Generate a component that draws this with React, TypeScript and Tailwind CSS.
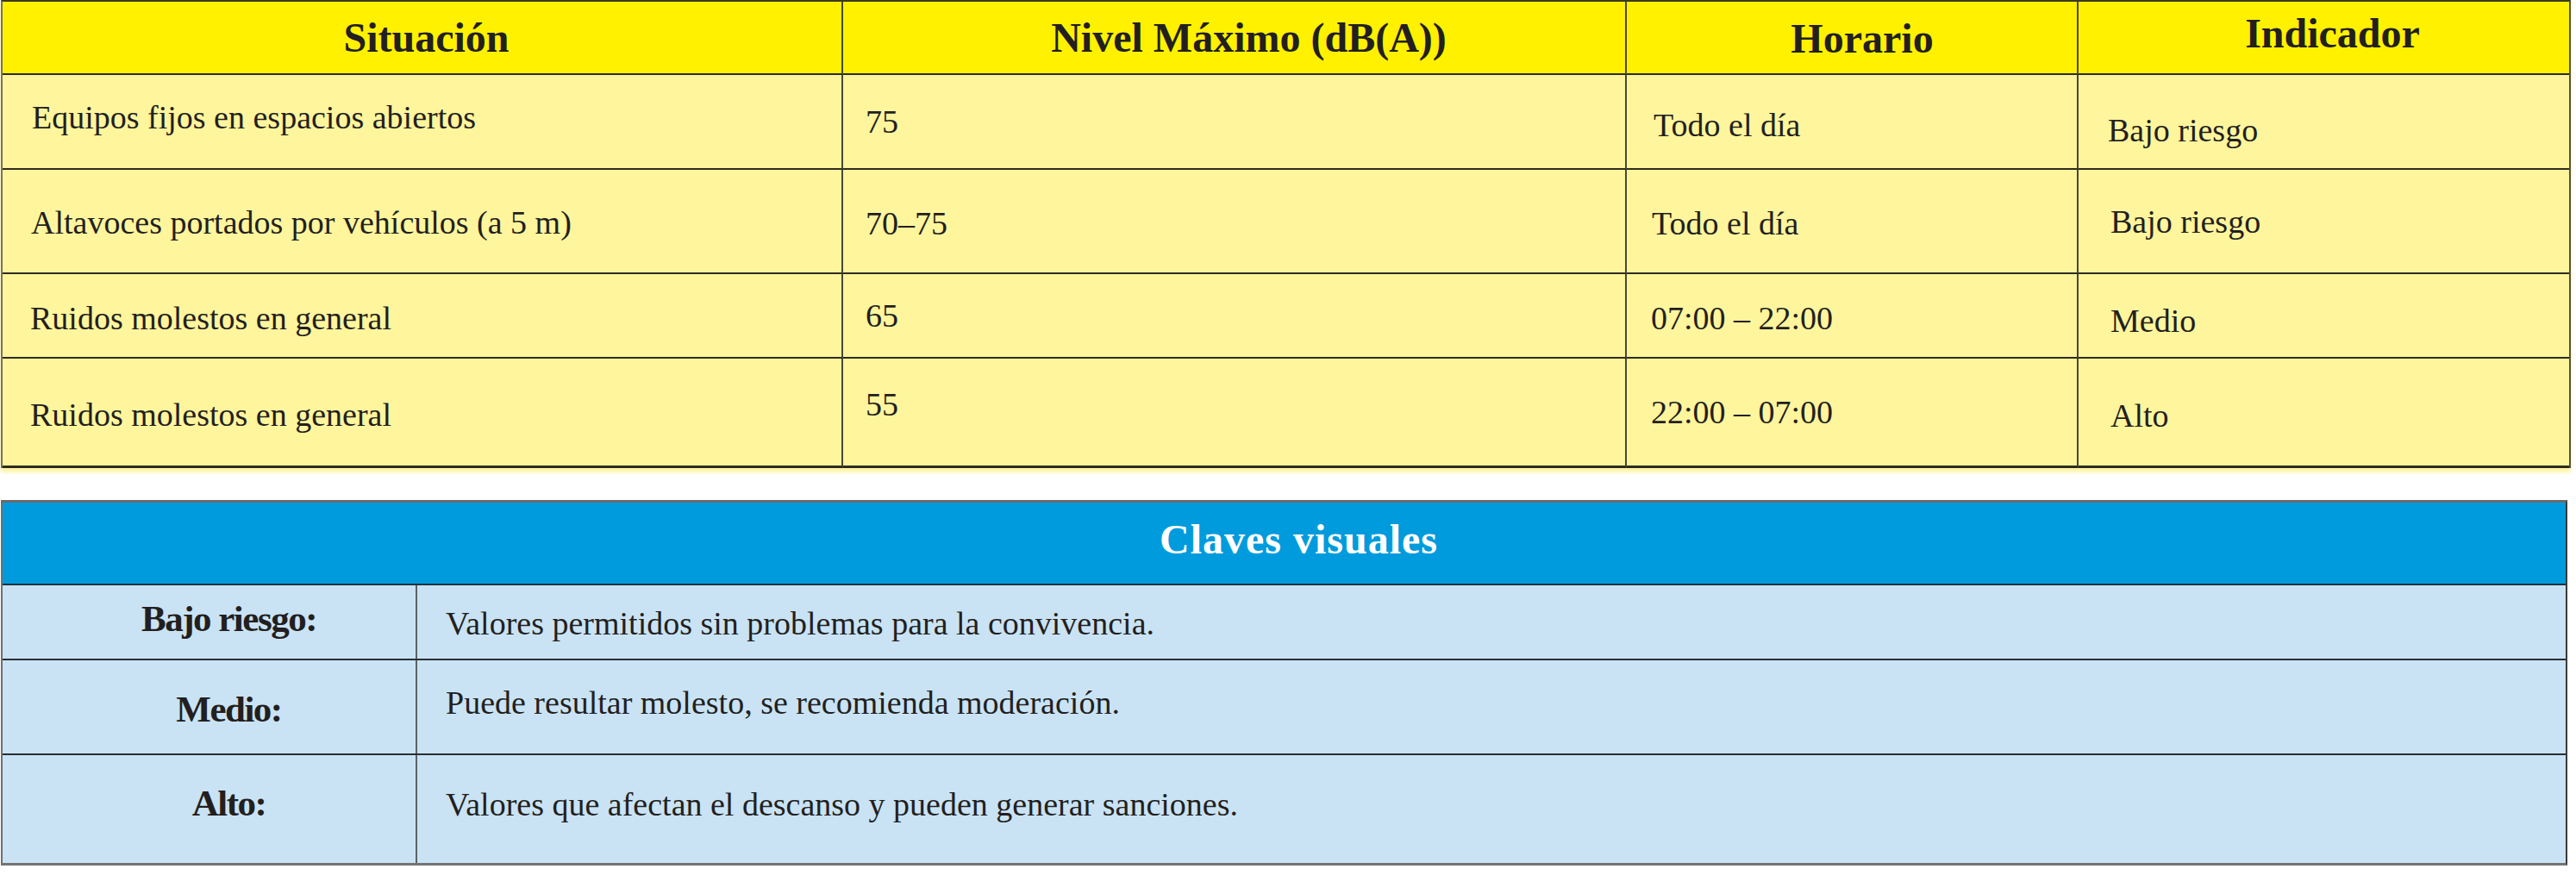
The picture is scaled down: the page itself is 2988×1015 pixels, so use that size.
import React from 'react';

type Cell = { text: string; cls: string };

const headers: Cell[] = [
  { text: 'Situación', cls: 'justify-center pl-[10px]' },
  { text: 'Nivel Máximo (dB(A))', cls: 'justify-center pl-[34px]' },
  { text: 'Horario', cls: 'justify-center pt-[2px] pl-[24px]' },
  { text: 'Indicador', cls: 'justify-center pb-[10px] pl-[20px]' },
];

const rows: { h: string; cells: Cell[] }[] = [
  {
    h: 'h-[110px]',
    cells: [
      { text: 'Equipos fijos en espacios abiertos', cls: 'pl-[34px] pb-[10px]' },
      { text: '75', cls: 'pl-[26px]' },
      { text: 'Todo el día', cls: 'pl-[31px] pt-[8px]' },
      { text: 'Bajo riesgo', cls: 'pl-[34px] pt-[20px]' },
    ],
  },
  {
    h: 'h-[121px]',
    cells: [
      { text: 'Altavoces portados por vehículos (a 5 m)', cls: 'pl-[33px] pt-[3px]' },
      { text: '70–75', cls: 'pl-[26px] pt-[4px]' },
      { text: 'Todo el día', cls: 'pl-[29px] pt-[5px]' },
      { text: 'Bajo riesgo', cls: 'pl-[37px]' },
    ],
  },
  {
    h: 'h-[98px]',
    cells: [
      { text: 'Ruidos molestos en general', cls: 'pl-[32px] pt-[6px]' },
      { text: '65', cls: 'pl-[26px]' },
      { text: '07:00 – 22:00', cls: 'pl-[28px] pt-[6px]' },
      { text: 'Medio', cls: 'pl-[37px] pt-[12px]' },
    ],
  },
  {
    h: 'h-[127px]',
    cells: [
      { text: 'Ruidos molestos en general', cls: 'pl-[32px] pt-[5px]' },
      { text: '55', cls: 'pl-[26px] pb-[18px]' },
      { text: '22:00 – 07:00', cls: 'pl-[28px]' },
      { text: 'Alto', cls: 'pl-[37px] pt-[7px]' },
    ],
  },
];

const colWidths = ['w-[975px]', 'w-[909px]', 'w-[524px]', 'w-[569px]'];

const keys: { label: string; desc: string; h: string; labelCls: string; descCls: string }[] = [
  {
    label: 'Bajo riesgo:',
    desc: 'Valores permitidos sin problemas para la convivencia.',
    h: 'h-[87px]',
    labelCls: 'pb-[9px]',
    descCls: 'pt-[3px]',
  },
  {
    label: 'Medio:',
    desc: 'Puede resultar molesto, se recomienda moderación.',
    h: 'h-[110px]',
    labelCls: 'pt-[4px]',
    descCls: 'pb-[10px]',
  },
  {
    label: 'Alto:',
    desc: 'Valores que afectan el descanso y pueden generar sanciones.',
    h: 'h-[125px]',
    labelCls: 'pb-[14px]',
    descCls: 'pb-[12px]',
  },
];

export default function App() {
  return (
    <div className="w-[2988px] h-[1015px] bg-white overflow-hidden font-['Liberation_Serif','Times_New_Roman',serif] text-[#231f20]">
      {/* Tabla de niveles */}
      <div className="ml-[1px] w-[2981px] border-t-2 border-l-2 border-r-2 border-t-[#3b3826] border-l-[#7a744f] border-r-[#55523a] shadow-[0_5px_4px_#fff4a6]">
        <div className="flex h-[85px] bg-[#fff100]">
          {headers.map((c, i) => (
            <div
              key={c.text}
              className={`${colWidths[i]} flex items-center border-b-2 border-[#2e2b1f] ${i < 3 ? 'border-r-2 border-r-[#4a4735]' : ''} ${c.cls}`}
            >
              <span className="text-[48px] leading-none font-bold">{c.text}</span>
            </div>
          ))}
        </div>
        {rows.map((r, ri) => (
          <div key={ri} className={`flex ${r.h} bg-[#fff59c]`}>
            {r.cells.map((c, i) => (
              <div
                key={i}
                className={`${colWidths[i]} flex items-center ${ri === rows.length - 1 ? 'border-b-[3px]' : 'border-b-2'} border-[#2e2b1f] ${i < 3 ? 'border-r-2 border-r-[#4a4735]' : ''} ${c.cls}`}
              >
                <span className="text-[38px] leading-none whitespace-nowrap">{c.text}</span>
              </div>
            ))}
          </div>
        ))}
      </div>

      {/* Claves visuales */}
      <div className="mt-[37px] ml-[1px] w-[2977px] border-t-[3px] border-l-2 border-r-2 border-b-[3px] border-t-[#6a6a6a] border-l-[#6f6f6f] border-r-[#3b3b3b] border-b-[#747474]">
        <div className="h-[96px] bg-[#009bdd] border-b-2 border-[#1f3340] flex items-center justify-center pl-[34px] pb-[8px]">
          <span className="text-[48px] leading-none font-bold text-white tracking-[1px]">Claves visuales</span>
        </div>
        {keys.map((k, i) => (
          <div
            key={k.label}
            className={`flex ${k.h} bg-[#c9e3f5] ${i < keys.length - 1 ? 'border-b-2 border-[#2a2f33]' : ''}`}
          >
            <div className={`w-[481px] shrink-0 border-r-2 border-[#5c6166] flex items-center justify-center pl-[46px] ${k.labelCls}`}>
              <span className="text-[43px] leading-none font-bold tracking-[-1.5px]">{k.label}</span>
            </div>
            <div className={`flex-1 flex items-center pl-[33px] ${k.descCls}`}>
              <span className="text-[38px] leading-none">{k.desc}</span>
            </div>
          </div>
        ))}
      </div>
    </div>
  );
}
